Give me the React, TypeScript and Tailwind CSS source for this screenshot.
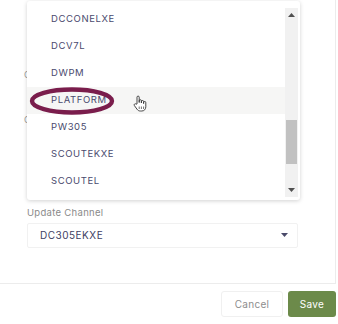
const channels = ['DCCONELXE', 'DCV7L', 'DWPM', 'PLATFORM', 'PW305', 'SCOUTEKXE', 'SCOUTEL']

function Triangle({ down, className }: { down?: boolean; className?: string }) {
  return (
    <svg width="7" height="4" viewBox="0 0 7 4" className={className}>
      {down ? <path d="M0 0h7L3.5 4z" fill="currentColor" /> : <path d="M0 4h7L3.5 0z" fill="currentColor" />}
    </svg>
  )
}

function Hand() {
  return (
    <svg width="16" height="17" viewBox="0 0 16 17" className="absolute left-[132px] top-[95px]">
      <path
        d="M5 9V2.2a1.1 1.1 0 0 1 2.2 0V7.5V5.8a1.1 1.1 0 0 1 2.2 0V8V6.6a1.1 1.1 0 0 1 2.2 0V8.6V7.6a1.1 1.1 0 0 1 2.2 0v4.2c0 2.4-1.6 4.2-4 4.2H8.3c-1.5 0-2.4-.6-3.3-1.8L2.4 10.6a1.1 1.1 0 0 1 1.7-1.4z"
        fill="#fff"
        stroke="#333"
        strokeWidth="0.9"
        strokeLinejoin="round"
      />
      <path d="M7.2 11.5v2.5M9.4 11.5v2.5M11.6 11.5v2.5" stroke="#333" strokeWidth="0.7" />
    </svg>
  )
}

export default function App() {
  return (
    <div className="relative w-[338px] h-[324px] bg-white overflow-hidden font-['Inter','Noto_Sans',sans-serif]">
      <div className="w-[336px] h-[284px] border-r border-b border-[#ececec] px-[24px] flex flex-col">
        <div className="h-[70px]" />
        <div className="text-[9px] text-[#999] leading-none">Current Version</div>
        <div className="h-[36px]" />
        <div className="text-[9px] text-[#999] leading-none">Current Channel</div>
        <div className="h-[84px]" />
        <div className="pl-[3px] text-[9.5px] text-[#8a8a8a] tracking-[0.3px] leading-none">Update Channel</div>
        <div className="ml-[3px] mt-[5px] h-[25px] w-[271px] border border-[#f1f1f1] rounded-[2px] flex items-center justify-between pl-[12px] pr-[9px]">
          <span className="text-[10px] text-[#3e3e63] tracking-[0.5px]">DC305EKXE</span>
          <Triangle down className="text-[#4a4a6a]" />
        </div>
      </div>

      <div className="h-[40px] w-[338px] flex items-center justify-end gap-[5px] pr-[2px]">
        <button className="h-[26px] w-[62px] rounded-[3px] border border-[#f0f0f0] bg-white text-[10px] text-[#8d8d8d] tracking-[0.3px]">
          Cancel
        </button>
        <button className="h-[26px] w-[48px] rounded-[3px] bg-[#6c8a4a] text-[10px] text-white tracking-[0.3px]">
          Save
        </button>
      </div>

      <div className="absolute left-[27px] top-[1px] w-[273px] h-[199px] bg-white rounded-[3px] shadow-[0_1px_4px_rgba(0,0,0,0.18)] flex">
        <div className="flex-1 pt-[5px]">
          {channels.map((c) => (
            <div
              key={c}
              className={`h-[27px] flex items-center pl-[24px] text-[9.5px] tracking-[0.6px] text-[#4a4a6e] ${c === 'PLATFORM' ? 'bg-[#f6f6f5]' : ''}`}
            >
              {c}
            </div>
          ))}
        </div>
        <div className="w-[13px] mt-[7px] mb-[3px] mr-[2px] bg-[#f1f1f1] flex flex-col items-center">
          <div className="h-[14px] flex items-center justify-center">
            <Triangle className="text-[#505050]" />
          </div>
          <div className="h-[98px]" />
          <div className="w-[11px] h-[44px] bg-[#c1c1c1]" />
          <div className="flex-1" />
          <div className="h-[14px] flex items-center justify-center">
            <Triangle down className="text-[#505050]" />
          </div>
        </div>
      </div>

      <svg width="90" height="32" viewBox="0 0 90 32" className="absolute left-[28px] top-[85px]">
        <ellipse cx="44" cy="16" rx="40" ry="11.5" fill="none" stroke="#7a1d4c" strokeWidth="4.4" />
      </svg>
      <Hand />
    </div>
  )
}
